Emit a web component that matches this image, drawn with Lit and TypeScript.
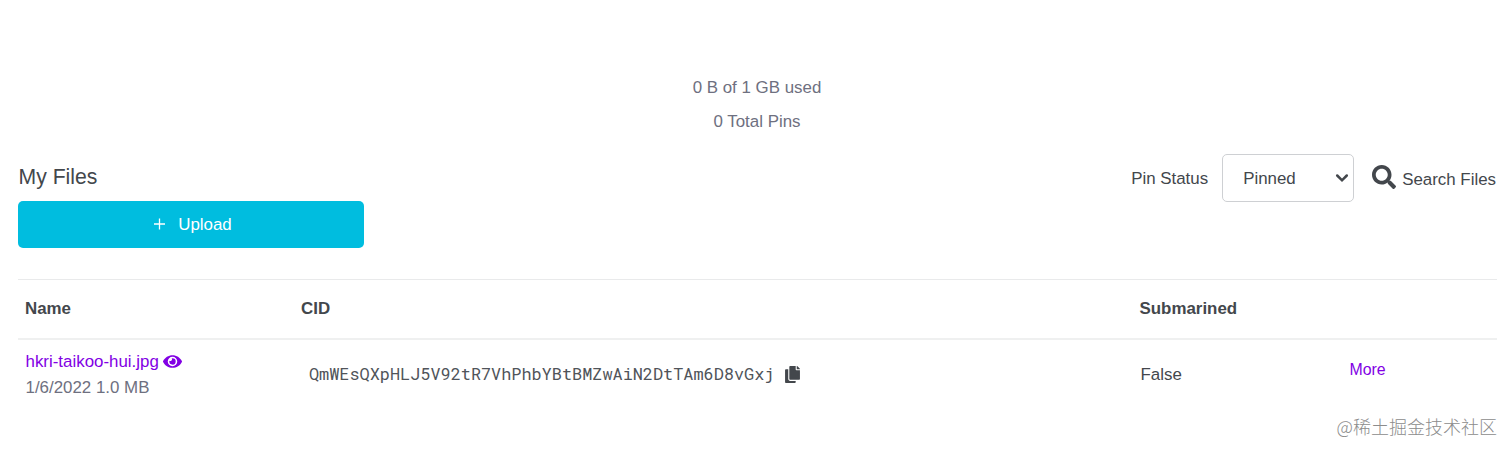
import { LitElement, html, css } from "lit";
import { customElement, property } from "lit/decorators.js";

@customElement("pin-toolbar")
class PinToolbar extends LitElement {
  static styles = css`
    :host { display: flex; justify-content: space-between; align-items: flex-start; height: 125px; padding: 0 16px 0 18px; }
    .left { width: 346px; padding-top: 10px; }
    h2 { margin: 0; padding-left: 0.5px; font-size: 21.2px; line-height: 26px; font-weight: 400; }
    .upload { display: flex; align-items: center; justify-content: center; box-sizing: border-box; width: 346px; height: 47px; margin-top: 11px; padding: 0 0 0 4px; border: 0; border-radius: 5px; background: #00bddf; color: #fff; font: 16.9px "Liberation Sans", Arial, sans-serif; }
    .upload svg { margin: 0 13px 2px 0; }
    .right { display: flex; align-items: center; }
    .label { padding-top: 2px; }
    .select { display: flex; align-items: center; justify-content: space-between; box-sizing: border-box; width: 132px; height: 48px; margin: 0 18px 0 14px; padding: 0 4px 0 20px; border: 1px solid #ced0d3; border-radius: 5px; }
    .select .label { padding-top: 1px; }
    .search { display: flex; align-items: center; }
    .search svg { margin: 0 6px 2px 0; }
    .search span { padding-top: 4px; }
  `;
  render() {
    return html`
      <div class="left">
        <h2>My Files</h2>
        <button class="upload">
          <svg width="11" height="12" viewBox="0 0 11 12"><path d="M5.500 .5v11M0 6h11" fill="none" stroke="#fff" stroke-width="1.3"/></svg>
          <span>Upload</span>
        </button>
      </div>
      <div class="right">
        <span class="label">Pin Status</span>
        <div class="select">
          <span class="label">Pinned</span>
          <svg width="14" height="10" viewBox="0 0 14 10"><path d="M2.200 2.500 7 7.300 11.800 2.500" fill="none" stroke="#43474c" stroke-width="2.500" stroke-linecap="round"/></svg>
        </div>
        <div class="search">
          <svg width="24" height="24" viewBox="0 0 512 512"><path fill="#43474c" d="M505 442.700 405.300 343c-4.500-4.500-10.600-7-17-7H372c27.600-35.300 44-79.700 44-128C416 93.100 322.900 0 208 0S0 93.100 0 208s93.100 208 208 208c48.300 0 92.700-16.400 128-44v16.300c0 6.400 2.500 12.500 7 17l99.700 99.700c9.400 9.400 24.600 9.400 33.900 0l28.300-28.300c9.400-9.400 9.400-24.600.1-34zM208 336c-70.700 0-128-57.200-128-128 0-70.700 57.200-128 128-128 70.700 0 128 57.200 128 128 0 70.700-57.200 128-128 128z"/></svg>
          <span>Search Files</span>
        </div>
      </div>`;
  }
}

@customElement("pin-table")
class PinTable extends LitElement {
  @property({ attribute: false }) rows: { name: string; meta: string; cid: string; submarined: string }[] = [];
  static styles = css`
    :host { display: block; margin: 0 15px 0 18px; border-top: 1px solid #e9eaeb; }
    .grid { display: grid; grid-template-columns: 276px 838.5px 210px 1fr; }
    .head { height: 58px; align-items: center; padding-left: 7px; border-bottom: 2px solid #eff0f0; font-weight: 700; }
    .row { padding-left: 7px; height: 70px; }
    .file { padding: 9px 0 0 0.5px; line-height: 26px; }
    .name { display: flex; align-items: center; color: #8200e4; }
    .name svg { margin: 0 0 2px 4px; }
    .meta { color: #6e7080; }
    .cid { display: flex; align-items: center; padding-left: 8px; height: 68px; font-family: "Roboto Mono", "Liberation Mono", monospace; font-size: 16.88px; color: #50545a; }
    .cid svg { margin-left: 11px; }
    .sub { line-height: 70px; padding-left: 1px; }
    .more { color: #8200e4; font-size: 15.9px; line-height: 60px; }
  `;
  render() {
    return html`
      <div class="grid head"><span>Name</span><span>CID</span><span>Submarined</span></div>
      ${this.rows.map((r) => html`
        <div class="grid row">
          <div class="file">
            <div class="name"><span>${r.name}</span>
              <svg width="19" height="17" viewBox="0 0 576 512"><path fill="currentColor" d="M572.520 241.400C518.290 135.590 410.930 64 288 64S57.680 135.640 3.480 241.410a32.350 32.350 0 0 0 0 29.190C57.710 376.410 165.070 448 288 448s230.320-71.640 284.520-177.410a32.350 32.350 0 0 0 0-29.190zM288 400a144 144 0 1 1 144-144 143.930 143.930 0 0 1-144 144zm0-240a95.310 95.310 0 0 0-25.310 3.790 47.850 47.850 0 0 1-66.900 66.900A95.780 95.780 0 1 0 288 160z"/></svg>
            </div>
            <div class="meta">${r.meta}</div>
          </div>
          <div class="cid"><span>${r.cid}</span>
            <svg width="15" height="17" viewBox="0 0 448 512"><path fill="#43474c" d="M320 448v40c0 13.255-10.745 24-24 24H24c-13.255 0-24-10.745-24-24V120c0-13.255 10.745-24 24-24h72v296c0 30.879 25.121 56 56 56h168zm0-344V0H152c-13.255 0-24 10.745-24 24v368c0 13.255 10.745 24 24 24h272c13.255 0 24-10.745 24-24V128H344c-13.200 0-24-10.800-24-24zm120.971-31.029L375.029 7.029A24 24 0 0 0 358.059 0H352v96h96v-6.059a24 24 0 0 0-7.029-16.970z"/></svg>
          </div>
          <div class="sub">${r.submarined}</div>
          <div class="more">More</div>
        </div>`)}`;
  }
}

@customElement("app-root")
class AppRoot extends LitElement {
  static styles = css`
    :host { display: block; position: relative; height: 453px; overflow: hidden; background: #fff; color: #43474c; font: 16.9px/20px "Liberation Sans", Arial, sans-serif; }
    .usage { height: 83px; padding: 71px 0 0 2px; text-align: center; color: #6e7080; line-height: 34px; }
    .mark { position: absolute; right: 15px; bottom: 14px; line-height: 26px; font-size: 18px; font-family: "Noto Sans CJK SC", sans-serif; font-weight: 300; color: #8c8c8c; }
  `;
  rows = [{ name: "hkri-taikoo-hui.jpg", meta: "1/6/2022 1.0 MB", cid: "QmWEsQXpHLJ5V92tR7VhPhbYBtBMZwAiN2DtTAm6D8vGxj", submarined: "False" }];
  render() {
    return html`
      <div class="usage"><div>0 B of 1 GB used</div><div>0 Total Pins</div></div>
      <pin-toolbar></pin-toolbar>
      <pin-table .rows=${this.rows}></pin-table>
      <div class="mark">@稀土掘金技术社区</div>`;
  }
}
